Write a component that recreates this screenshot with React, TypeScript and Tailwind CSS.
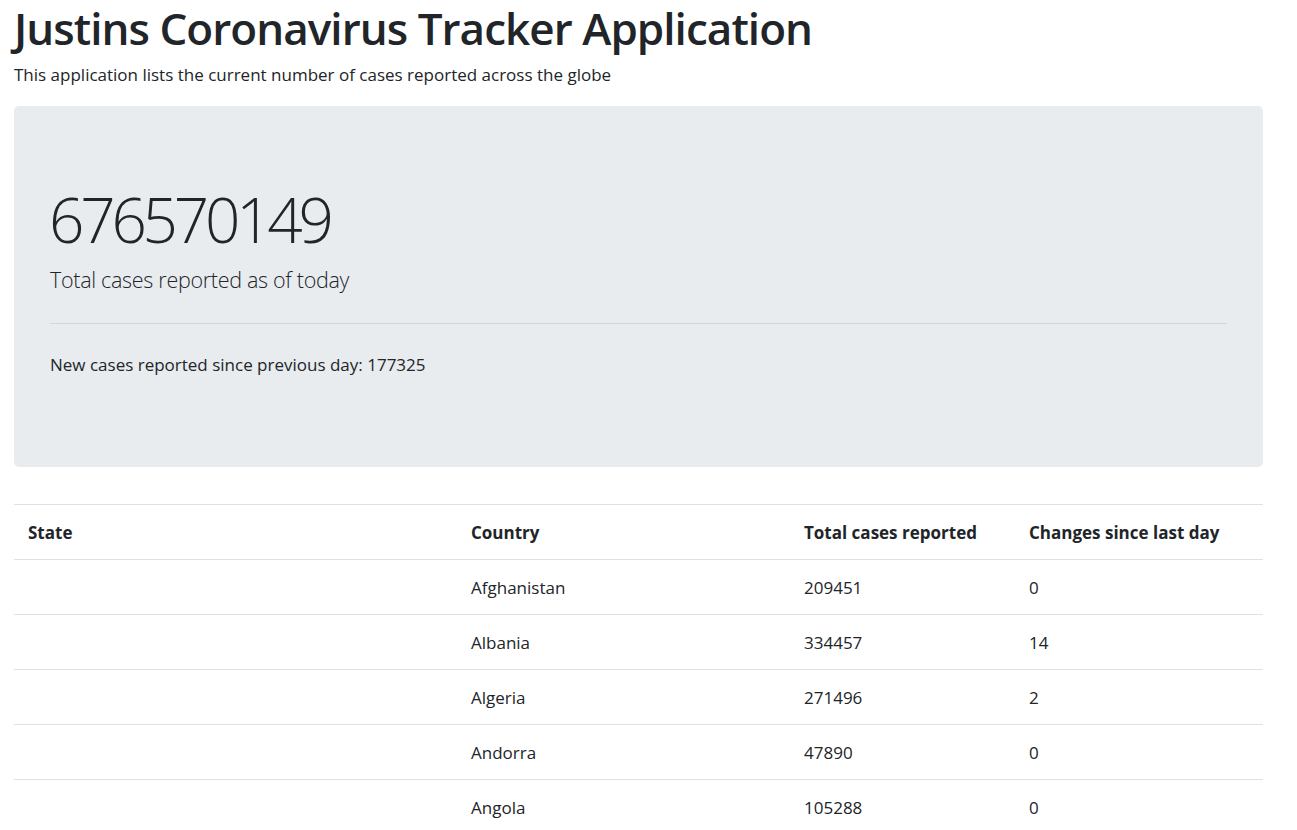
import React from "react";

const rows: [string, string, string, string][] = [
  ["", "Afghanistan", "209451", "0"],
  ["", "Albania", "334457", "14"],
  ["", "Algeria", "271496", "2"],
  ["", "Andorra", "47890", "0"],
  ["", "Angola", "105288", "0"],
];

function Row({ cells, head }: { cells: string[]; head?: boolean }) {
  return (
    <div
      className={`grid grid-cols-[445px_333px_225px_246px] h-[55px] border-t border-[#dee2e6] items-center ${
        head ? "font-bold" : ""
      }`}
    >
      {cells.map((c, i) => (
        <div key={i} className={`pt-[2px] ${i === 0 ? "pl-[14px]" : "pl-[12px]"}`}>
          {c}
        </div>
      ))}
    </div>
  );
}

export default function App() {
  return (
    <div
      className="min-h-[830px] w-[1297px] bg-white text-[#212529]"
      style={{ fontFamily: '"Open Sans", "Noto Sans", sans-serif' }}
    >
      <div className="pl-[14px] w-[1263px]">
        <h1 className="text-[44px] leading-[56px] font-semibold tracking-[-0.95px]">
          Justins Coronavirus Tracker Application
        </h1>
        <p className="text-[17px] leading-[24px] mt-[7px]">
          This application lists the current number of cases reported across the globe
        </p>
        <div className="mt-[19px] bg-[#e9ecef] rounded-[5px] h-[361px] px-[36px] pt-[76px]">
          <div className="text-[62px] leading-[74px] font-light tracking-[-4.2px] -ml-[1px]">
            676570149
          </div>
          <div className="text-[21.5px] leading-[32px] font-light mt-[8px] tracking-[-0.3px]">
            Total cases reported as of today
          </div>
          <div className="mt-[27px] border-t border-[#d4d6d9]" />
          <div className="mt-[29px] text-[17px] leading-[24px]">
            New cases reported since previous day: 177325
          </div>
        </div>
        <div className="mt-[37px] text-[17px] pb-[2px]">
          <Row head cells={["State", "Country", "Total cases reported", "Changes since last day"]} />
          {rows.map((r, i) => (
            <Row key={i} cells={r} />
          ))}
        </div>
      </div>
    </div>
  );
}
